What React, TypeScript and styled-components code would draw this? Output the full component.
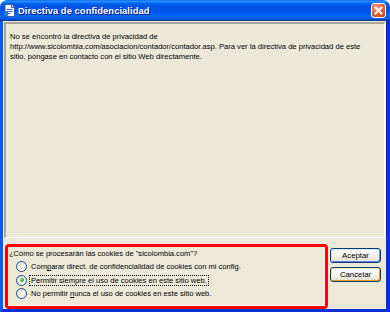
import React from "react";
import styled, { createGlobalStyle } from "styled-components";

const GlobalStyle = createGlobalStyle`
  html, body {
    margin: 0;
    padding: 0;
    background: #ffffff;
  }
  body {
    font-family: "Liberation Sans", Arial, sans-serif;
  }
`;

const Window = styled.div`
  width: 390px;
  height: 312px;
  display: flex;
  flex-direction: column;
`;

const TitleBar = styled.div`
  height: 21px;
  flex: none;
  display: flex;
  align-items: center;
  gap: 2px;
  padding: 0 4px 0 3px;
  border-radius: 7px 7px 0 0;
  background: linear-gradient(
    to bottom,
    #0058ee 0%,
    #3593ff 5%,
    #288eff 8%,
    #127dff 11%,
    #036ffc 14%,
    #0262ee 18%,
    #0057e5 24%,
    #0054e3 30%,
    #0055eb 56%,
    #005bf5 66%,
    #026afe 76%,
    #0062ef 86%,
    #0052d6 92%,
    #0040ab 96%,
    #003092 100%
  );
`;

const Title = styled.span`
  flex: 1;
  color: #ffffff;
  font-weight: bold;
  font-size: 9.3px;
  letter-spacing: 0.1px;
  text-shadow: 1px 1px 0 #0a1883;
  white-space: nowrap;
`;

const CloseButton = styled.div`
  width: 15px;
  height: 15px;
  box-sizing: border-box;
  border: 1px solid #ffffff;
  border-radius: 3px;
  background: radial-gradient(circle at 35% 30%, #f0a68a 0%, #e2673f 45%, #c6391b 100%);
  display: flex;
  align-items: center;
  justify-content: center;
`;

const Frame = styled.div`
  flex: 1;
  display: flex;
  flex-direction: column;
  gap: 6px;
  border-left: 3px solid #0b5ae8;
  border-right: 4px solid #0a2fd6;
  border-bottom: 3px solid #0831d9;
  background: #ece9d8;
  padding: 1px 1px 0 1px;
`;

const InfoPanel = styled.div`
  height: 216px;
  box-sizing: border-box;
  border-top: 2px solid #a8a594;
  border-left: 2px solid #a8a594;
  border-right: 1px solid #ffffff;
  border-bottom: 1px solid #ffffff;
  background: #ebe8d7;
  padding: 8px 2px 0 4px;
  font-size: 7.6px;
  line-height: 10px;
  color: #000000;
`;

const Line = styled.div`
  white-space: nowrap;
`;

const Footer = styled.div`
  height: 65px;
  display: flex;
  padding-left: 1px;
  gap: 2px;
`;

const Highlight = styled.div`
  width: 323px;
  box-sizing: border-box;
  border: 3px solid #ff0000;
  border-radius: 4px;
  display: flex;
`;

const GroupBox = styled.div`
  flex: 1;
  border-right: 1px solid #ffffff;
  border-bottom: 1px solid #ffffff;
  padding: 1px 0 0 1px;
  font-size: 7.55px;
  color: #000000;
`;

const Question = styled.div`
  height: 12px;
  line-height: 12px;
  white-space: nowrap;
`;

const OptionRow = styled.div`
  height: 13.5px;
  display: flex;
  align-items: center;
  padding-left: 7px;
  gap: 3px;
  white-space: nowrap;
`;

const Radio = styled.span<{ checked?: boolean }>`
  width: 11px;
  height: 11px;
  box-sizing: border-box;
  border-radius: 50%;
  border: 1px solid #1c5180;
  background: radial-gradient(circle at 65% 65%, #ffffff 0%, #f2f1ea 40%, #d6d3c6 100%);
  display: flex;
  align-items: center;
  justify-content: center;
  flex: none;
  &::after {
    content: "";
    display: ${({ checked }) => (checked ? "block" : "none")};
    width: 4px;
    height: 4px;
    border-radius: 50%;
    background: radial-gradient(circle at 35% 35%, #7ee07e 0%, #21a121 70%);
  }
`;

const OptionLabel = styled.span<{ focused?: boolean }>`
  padding: 0 1px;
  line-height: 9px;
  outline: ${({ focused }) => (focused ? "1px dotted #000000" : "none")};
  outline-offset: 0;
`;

const Mnemonic = styled.span`
  text-decoration: underline;
`;

const ButtonColumn = styled.div`
  display: flex;
  flex-direction: column;
  gap: 4px;
  padding-top: 4px;
`;

const DialogButton = styled.button<{ accent: "default" | "hover" }>`
  width: 51px;
  height: 15px;
  padding: 0;
  margin: 0;
  box-sizing: border-box;
  border: 1px solid #003c74;
  border-radius: 3px;
  font-family: "Liberation Sans", Arial, sans-serif;
  font-size: 7.8px;
  color: #000000;
  background: linear-gradient(to bottom, #ffffff 0%, #f4f3ee 50%, #e6e3d6 90%, #d6d0c5 100%);
  box-shadow: ${({ accent }) =>
    accent === "default"
      ? "inset 1px 1px 0 #cee7ff, inset -1px -1px 0 #6982ee"
      : "inset 1px 1px 0 #ffe9a8, inset -1px -1px 0 #e5a019"};
`;

const PageIcon = () => (
  <svg width="13" height="13" viewBox="0 0 13 13">
    <path d="M2 0.5 H8.5 L11.5 3.5 V12.5 H2 Z" fill="#ffffff" stroke="#3b5f9a" />
    <path d="M8.5 0.5 V3.5 H11.5" fill="#d8e4f4" stroke="#3b5f9a" />
    <rect x="3.5" y="5" width="6" height="1" fill="#2c66d0" />
    <rect x="3.5" y="7" width="6" height="1" fill="#2c66d0" />
    <rect x="3.5" y="9" width="4" height="1" fill="#2c66d0" />
    <circle cx="3" cy="10" r="2.2" fill="#2f8ae0" stroke="#1a4d9a" strokeWidth="0.6" />
  </svg>
);

const CloseGlyph = () => (
  <svg width="9" height="9" viewBox="0 0 9 9">
    <path d="M1.5 1.5 L7.5 7.5 M7.5 1.5 L1.5 7.5" stroke="#ffffff" strokeWidth="1.8" strokeLinecap="square" />
  </svg>
);

const App: React.FC = () => {
  return (
    <>
      <GlobalStyle />
      <Window>
        <TitleBar>
          <PageIcon />
          <Title>Directiva de confidencialidad</Title>
          <CloseButton>
            <CloseGlyph />
          </CloseButton>
        </TitleBar>
        <Frame>
          <InfoPanel>
            <Line>No se encontró la directiva de privacidad de</Line>
            <Line>
              http://www.sicolombia.com/asociacion/contador/contador.asp. Para ver la directiva de privacidad de este
            </Line>
            <Line>sitio, póngase en contacto con el sitio Web directamente.</Line>
          </InfoPanel>
          <Footer>
            <Highlight>
              <GroupBox>
                <Question>¿Cómo se procesarán las cookies de "sicolombia.com"?</Question>
                <OptionRow>
                  <Radio />
                  <OptionLabel>
                    Com<Mnemonic>p</Mnemonic>arar direct. de confidencialidad de cookies con mi config.
                  </OptionLabel>
                </OptionRow>
                <OptionRow>
                  <Radio checked />
                  <OptionLabel focused>Permitir siempre el uso de cookies en este sitio web.</OptionLabel>
                </OptionRow>
                <OptionRow>
                  <Radio />
                  <OptionLabel>
                    No permitir <Mnemonic>n</Mnemonic>unca el uso de cookies en este sitio web.
                  </OptionLabel>
                </OptionRow>
              </GroupBox>
            </Highlight>
            <ButtonColumn>
              <DialogButton accent="default">Aceptar</DialogButton>
              <DialogButton accent="hover">Cancelar</DialogButton>
            </ButtonColumn>
          </Footer>
        </Frame>
      </Window>
    </>
  );
};

export default App;
